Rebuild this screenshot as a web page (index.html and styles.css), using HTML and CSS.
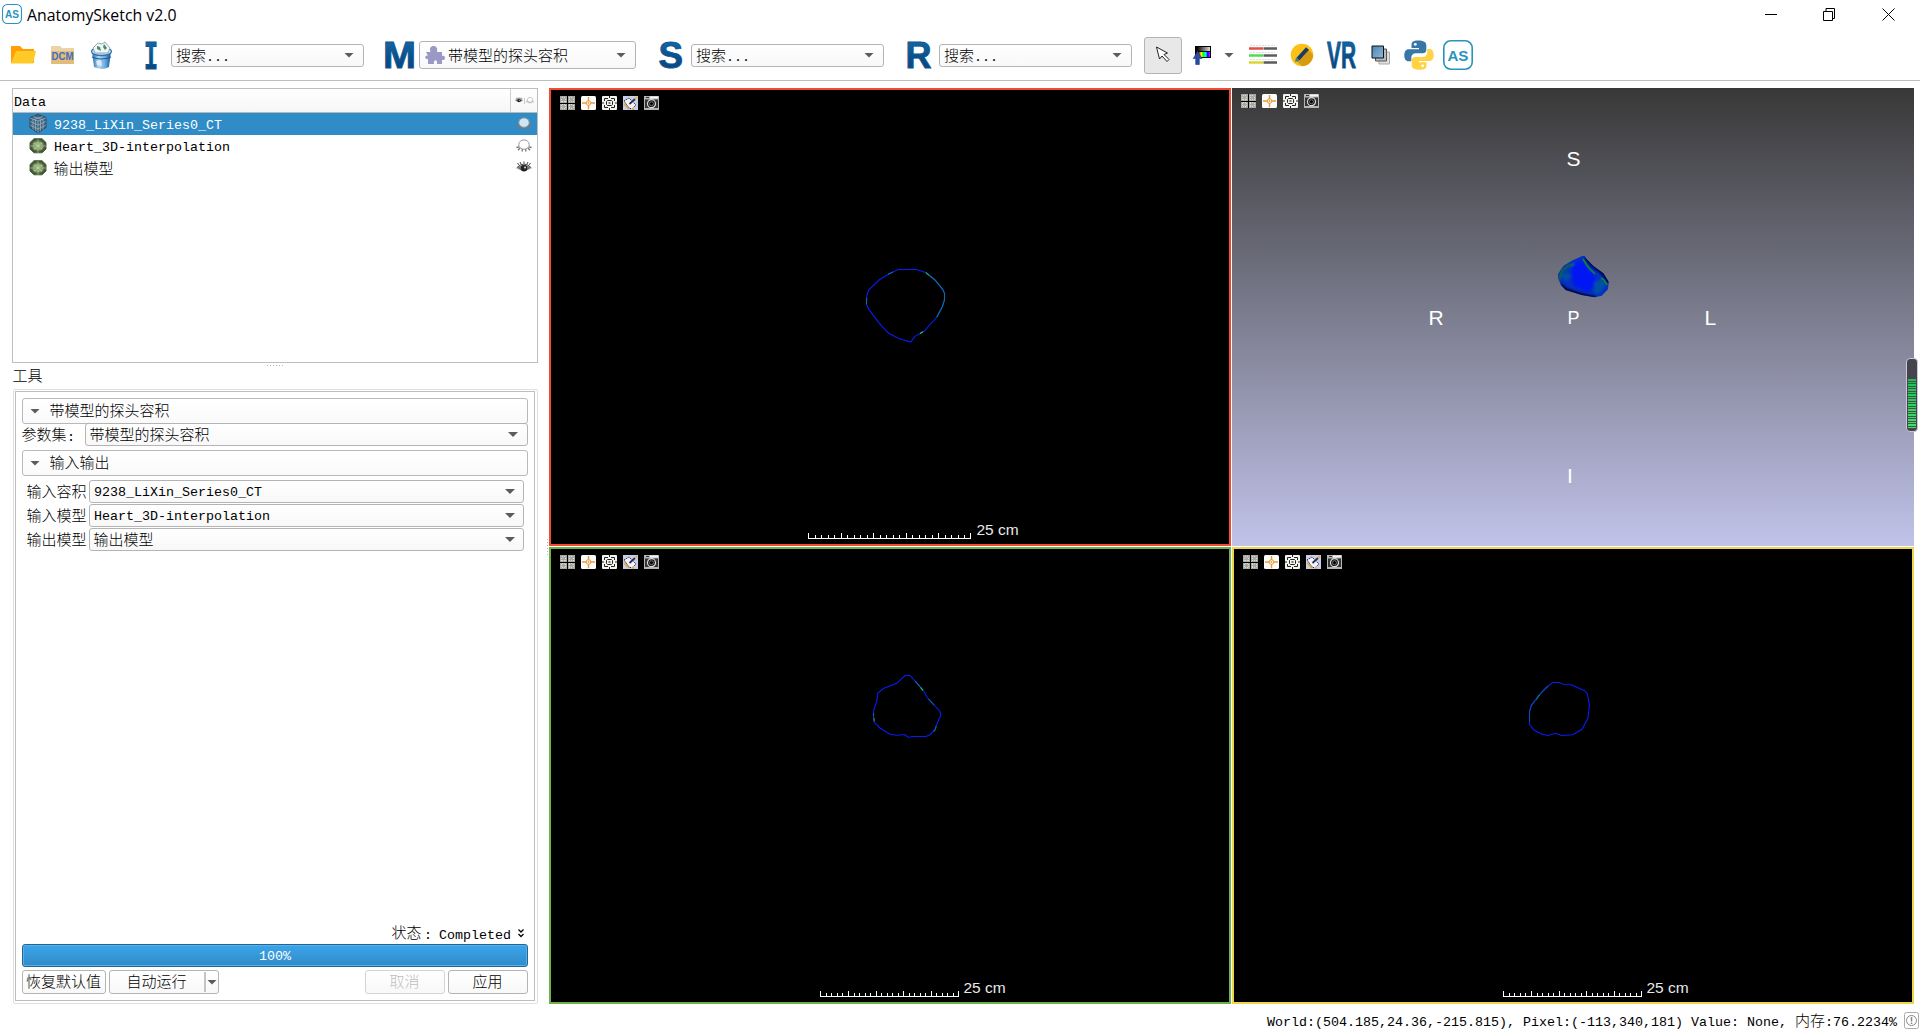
FILE: index.html
```html
<!DOCTYPE html>
<html lang="zh-CN">
<head>
<meta charset="utf-8">
<title>AnatomySketch v2.0</title>
<link rel="stylesheet" href="styles.css">
</head>
<body>
<svg class="defs" width="0" height="0" aria-hidden="true">
  <defs>
    <linearGradient id="letter" x1="0" y1="0" x2="0" y2="1"><stop offset="0" stop-color="#1c6fae"/><stop offset=".55" stop-color="#07508c"/><stop offset="1" stop-color="#123f73"/></linearGradient>
    <linearGradient id="bin" x1="0" y1="0" x2="1" y2="0"><stop offset="0" stop-color="#1d64a8"/><stop offset=".35" stop-color="#b4d8f2"/><stop offset=".7" stop-color="#6aa9dd"/><stop offset="1" stop-color="#10508f"/></linearGradient>
    <linearGradient id="spectrum"><stop offset="0" stop-color="#f00"/><stop offset=".2" stop-color="#ff0"/><stop offset=".4" stop-color="#0f0"/><stop offset=".6" stop-color="#0ff"/><stop offset=".8" stop-color="#00f"/><stop offset="1" stop-color="#f0f"/></linearGradient>
    <linearGradient id="gray"><stop offset="0" stop-color="#000"/><stop offset="1" stop-color="#ddd"/></linearGradient>
    <radialGradient id="ball"><stop offset="0" stop-color="#b7cf97"/><stop offset=".6" stop-color="#6d8a55"/><stop offset="1" stop-color="#35472d"/></radialGradient>
    <linearGradient id="sheet" x1="0" y1="0" x2="1" y2="1"><stop offset="0" stop-color="#4a86b4"/><stop offset="1" stop-color="#8db9d8"/></linearGradient>
    <filter id="soft" x="-30%" y="-30%" width="160%" height="160%"><feGaussianBlur stdDeviation="1.3"/></filter>
    <clipPath id="heart-clip"><path id="heart-shape" d="M182.300 126L171.700 130.700 163.300 136 158 144v4.300l3 6.700 4.700 5 16 5 13.300 2.300 6.700-1.600 6.300-6.400.700-7.600-5.400-8.400-10-7.300-6.600-6.700-2-3.300z"/></clipPath>
  </defs>
  <symbol id="i-grid" viewBox="0 0 15 14"><path fill="#aaaaa4" d="M0 0h15v14H0z"/><path stroke="#dcdcd4" stroke-dasharray="1 1" d="M2 1.500h4M9 1.500h4M2 12.500h4M9 12.500h4M1.500 3v3M13.500 3v3M1.500 9v3M13.500 9v3M5.500 3v3M9.500 3v3M5.500 9v3M9.500 9v3M2 5.500h4M9 5.500h4M2 8.500h4M9 8.500h4"/><path stroke="#000" d="M7.500 0v14M0 7.500h15"/></symbol>
  <symbol id="i-cross" viewBox="0 0 15 14"><rect width="15" height="14" rx="1.500" fill="#fdfdfb"/><g fill="none" stroke="#ea9a3c"><path stroke-width="1.400" d="M7.500 1v4.200M7.500 9v4.200M1 7h4.500M9.500 7H14"/><circle cx="7.500" cy="7" r="2.300"/></g><circle cx="7.500" cy="7" r=".9" fill="#f0a040"/></symbol>
  <symbol id="i-fit" viewBox="0 0 15 14"><rect width="15" height="14" rx="1" fill="#f4f4ee"/><g fill="none" stroke="#222"><path d="M2.500 5V2.500H6M9 2.500h3.500V5M12.500 9v2.500H9M6 11.500H2.500V9M7.500 0v2M7.500 12v2M0 7h2M13 7h2"/><path d="M5.500 4.500h4l1 1v3l-1 1h-4l-1-1v-3z"/></g><path fill="#777" d="M6.500 6h2v2h-2z"/></symbol>
  <symbol id="i-edit" viewBox="0 0 15 14"><path fill="#c8cdec" d="M0 0h15v14H0z"/><path fill="#f3f3f8" stroke="#222" stroke-dasharray="1.500 1" d="M1 5l5-3 7 7-4 4-3-1z"/><path stroke="#e2a52b" stroke-width="1.200" d="M1 8l5 5M9 12l2 2"/><path stroke="#222b55" stroke-width="1.700" d="M6.500 8L12 3"/><path stroke="#e8b33a" stroke-width="2" d="M12 3l2-2"/></symbol>
  <symbol id="i-cam" viewBox="0 0 15 14"><path fill="#b5b5b3" d="M0 0h15v14H0z"/><path fill="#343434" d="M1 3.500h13V12H1zM2 1h3v1H2z"/><path fill="#f7f7f7" d="M6 .5h8v2H6z"/><circle cx="7.500" cy="7.700" r="4" fill="#111" stroke="#ddd" stroke-width="1.200"/><circle cx="7.500" cy="7.700" r="2" fill="#000" stroke="#999" stroke-width=".7"/></symbol>
  <symbol id="i-mesh" viewBox="0 0 18 16"><path fill="url(#ball)" stroke="#526543" d="M5 .7h8l4 3.800v6.500l-4 3.800H5L1 11V4.500z"/><path fill="none" stroke="#d3e0bd" stroke-width=".7" d="M9 1v4M9 11v4M1 8h4M13 8h4M5 5h8v6H5zM5 5l4 3 4-3M5 11l4-3 4 3" opacity=".65"/></symbol>
  <symbol id="i-off" viewBox="0 0 16 14"><path stroke="#777" stroke-width="1.300" d="M3 8L.5 8.500M4 9l-2 2.200M6.500 10l-.5 2.500M9.500 10l.5 2.500M12 9l2 2.200M13 8l2.500.5"/><ellipse cx="8" cy="5.600" rx="5.200" ry="4.700" fill="currentColor" stroke="#999"/></symbol>
  <symbol id="i-on" viewBox="0 0 16 14"><path fill="none" stroke="#444" d="M3 4L1.500 2M5 3L4 1M8 2.500V.5M11 3l1-2M13 4l1.500-2M.5 7Q8-1 15.500 7"/><path fill="#777" d="M1 7q7-7 14 0-7 6-14 0z"/><circle cx="8" cy="7.200" r="3.200" fill="#222"/><circle cx="9" cy="6.500" r="1" fill="#ddd"/></symbol>
  <symbol id="i-as" viewBox="0 0 30 30"><rect x=".8" y=".8" width="28.400" height="28.400" rx="7" fill="#fff" stroke="#2a93bd" stroke-width="1.600"/><text x="4.400" y="20.500" class="as-text" textLength="21" lengthAdjust="spacingAndGlyphs">AS</text></symbol>
  <symbol id="i-bar" viewBox="0 0 139 6"><path stroke="#fff" d="M0 5.500h139M.5 0v6M28.500 0v6M56.500 0v6M83.500 0v6M111.500 0v6M138.500 0v6M6.500 2v4M11.500 2v4M17.500 2v4M22.500 2v4M34.500 2v4M39.500 2v4M45.500 2v4M50.500 2v4M61.500 2v4M67.500 2v4M72.500 2v4M78.500 2v4M89.500 2v4M94.500 2v4M100.500 2v4M105.500 2v4M116.500 2v4M122.500 2v4M127.500 2v4M133.500 2v4"/></symbol>
</svg>

<header class="titlebar">
  <svg class="app-icon" width="20" height="20"><use href="#i-as"/></svg>
  <span class="app-name">AnatomySketch v2.0</span>
  <svg class="win-buttons" width="130" height="13" fill="none" stroke="#000"><path d="M0 6.500h12M58.500 3.500h9v9h-9zM61 3V.5h8.500v10H68M117.500.5l12 12M129.500.5l-12 12"/></svg>
</header>

<nav class="toolbar">
  <svg class="folder" width="26" height="20"><path fill="#ffa000" d="M1 1h9l3 3h11v14H1z"/><path fill="#ffca28" d="M6 6h20l-3 12.500H1z"/></svg>
  <svg class="dcm" width="25" height="20"><path fill="#e9d3ab" d="M1 1h9l2 2h12v6H1z"/><path fill="#e4bb79" d="M1 6h23v13H1z"/><text x="1.500" y="15" class="dcm-text" textLength="22" lengthAdjust="spacingAndGlyphs">DCM</text></svg>
  <svg class="trash" width="23" height="29"><path fill="url(#bin)" d="M2 10h19l-2 16q-7 4-15 0z"/><path fill="none" stroke="#1c5e9c" stroke-width="1.200" d="M2 16q9 4 19 0"/><ellipse cx="11.500" cy="10.500" rx="10" ry="4" fill="#cfe3f2" stroke="#2d72b5" stroke-width="1.300"/><path fill="#eef6fa" stroke="#7794a3" stroke-width=".8" d="M3 7l5-5 4 1 3-2 5 6-2 5H5z"/><path fill="#4d8b62" d="M7 5l3 1 1 4-4-2zM14 3l3 4-2 2-2-3z"/><path fill="#e6f2fb" d="M6 20l5-1 1 6-5-1z" opacity=".8"/></svg>
  <svg class="l-i" width="14" height="29"><text x="0" y="27.500" class="letter slab" textLength="14" lengthAdjust="spacingAndGlyphs">I</text></svg>
  <div class="combo c-i"><span><b>搜索</b>...</span></div>
  <svg class="l-m" width="32" height="29"><text x="-1" y="27" class="letter" textLength="33" lengthAdjust="spacingAndGlyphs">M</text></svg>
  <div class="combo c-m"><svg width="20" height="20"><path fill="#9a98c4" d="M1 7h4.500C4 3 6 1 8.500 1S13 3 12 7h5v4c4-2 4 5 0 4v4h-5c1-5-4-5-3 0H3v-5c-4 1-3-5 0-3z"/></svg><span><b>带模型的探头容积</b></span></div>
  <svg class="l-s" width="24" height="29"><text x="-.5" y="27" class="letter" textLength="24.500" lengthAdjust="spacingAndGlyphs">S</text></svg>
  <div class="combo c-s"><span><b>搜索</b>...</span></div>
  <svg class="l-r" width="25" height="29"><text x="-1.500" y="27" class="letter" textLength="26" lengthAdjust="spacingAndGlyphs">R</text></svg>
  <div class="combo c-r"><span><b>搜索</b>...</span></div>
  <div class="tool-btn"><svg width="16" height="18"><path fill="#fff" stroke="#222" d="M1.500 1l3 12 2.500-3 5 5.500 2-2-5-5 3.500-1.500z"/></svg></div>
  <svg class="lut" width="20" height="20"><path fill="#000" d="M2 1h16v12H2z"/><path fill="url(#gray)" d="M4 2h13v4H4z"/><path fill="url(#spectrum)" d="M6 7h11v5H6z"/><path fill="#2b4da0" stroke="#1b3678" stroke-width=".6" d="M4.500 6L9 13.500H6.300v6H2.700v-6H.3z"/></svg>
  <i class="arrow lut-arrow"></i>
  <svg class="lines" width="28" height="22"><path stroke="#e2504a" stroke-width="2.500" d="M0 4.500h14"/><path stroke="#4cdd55" stroke-width="2.500" d="M0 11.500h14"/><path stroke="#d9d632" stroke-width="2.500" d="M0 18.500h14"/><path stroke="#5c5c5c" stroke-width="2.500" d="M14.500 4.500H28M14.500 11.500H28M14.500 18.500H28"/><path stroke="#ddd" stroke-dasharray="2 1" d="M1 1.500h25M1 8.500h25M1 15.500h25"/></svg>
  <svg class="pencil" width="24" height="24"><circle cx="12" cy="12" r="11.300" fill="#fcc019"/><path fill="#d69b12" d="M6 18L18 6l5 6a11 11 0 0 1-11 11z"/><path stroke="#1d3a63" stroke-width="4" d="M8 16L17.500 5.500"/><path fill="#1f8aa0" d="M5 19l1-4.500 3.500 3z"/></svg>
  <svg class="vr" width="29" height="30"><text x="0" y="27.500" class="letter" textLength="29" lengthAdjust="spacingAndGlyphs">VR</text></svg>
  <svg class="layers" width="20" height="20"><path fill="#e0e0e0" stroke="#aaa" d="M8 7h10.500v12H8z"/><path fill="#bbb" stroke="#555" d="M4.500 4h11v12h-11z"/><path fill="url(#sheet)" stroke="#111" d="M1 1h11.500v12H1z"/></svg>
  <svg class="python" width="30" height="30" viewBox="0 0 30 30"><path fill="#3776a8" d="M14.500.5c-6 0-7 2-7 4.500v3h7.500v1.200H4.500C2 9.200.3 11.500.3 15.200s1.600 6 4 6h3V17.500c0-2.500 2-4.300 4.300-4.300H19c2 0 3.300-1.500 3.300-3.500V5c0-3-3-4.500-7.800-4.500z"/><circle cx="11.300" cy="4.300" r="1.400" fill="#fff"/><path fill="#ffd341" d="M15.500 29.700c6 0 7-2 7-4.500v-3H15V21h10.500c2.500 0 4.200-2.300 4.200-6s-1.600-6-4-6h-2.500v3.700c0 2.500-2 4.300-4.300 4.300H11c-2 0-3.300 1.500-3.300 3.500v4.700c0 3 3 4.500 7.800 4.500z"/><circle cx="18.700" cy="25.800" r="1.400" fill="#fff"/></svg>
  <svg class="as" width="30" height="30"><use href="#i-as"/></svg>
</nav>

<main class="work">
  <aside class="side">
    <section class="tree">
      <div class="tree-head"><span class="th-name">Data</span><span class="th-eye"><svg width="8" height="7"><use href="#i-on"/></svg><i></i><svg width="8" height="7"><use href="#i-off"/></svg></span></div>
      <div class="node selected"><svg width="18" height="20"><path fill="#43667f" stroke="#2c4658" d="M9 .5l8 3v10l-8 5.500-8-5.500v-10z"/><path fill="none" stroke="#a9c3d5" stroke-width=".6" d="M1 4l8 3 8-3M9 7v12M1 7.500l8 3.500 8-3.500M1 11l8 4 8-4M4 5v10.500M6.500 6v11M11.500 6v11M14 5v10.500M4 2.500l9 3M14 2.500l-9 3"/></svg><span>9238_LiXin_Series0_CT</span><svg class="eye" width="16" height="14"><use href="#i-off"/></svg></div>
      <div class="node"><svg width="18" height="16"><use href="#i-mesh"/></svg><span>Heart_3D-interpolation</span><svg class="eye" width="16" height="14"><use href="#i-off"/></svg></div>
      <div class="node"><svg width="18" height="16"><use href="#i-mesh"/></svg><span><b>输出模型</b></span><svg class="eye" width="16" height="14"><use href="#i-on"/></svg></div>
    </section>
    <div class="grip-h"></div>
    <h2 class="tools-title"><b>工具</b></h2>
    <section class="panel">
      <div class="panel-in">
        <div class="group"><i class="arrow"></i><b>带模型的探头容积</b></div>
        <div class="param"><label><b>参数集</b>:</label><div class="combo"><span><b>带模型的探头容积</b></span></div></div>
        <div class="group g2"><i class="arrow"></i><b>输入输出</b></div>
        <div class="io">
          <label><b>输入容积</b></label><div class="combo"><span class="latin">9238_LiXin_Series0_CT</span></div>
          <label><b>输入模型</b></label><div class="combo"><span class="latin">Heart_3D-interpolation</span></div>
          <label><b>输出模型</b></label><div class="combo"><span><b>输出模型</b></span></div>
        </div>
        <div class="state"><span><b>状态</b><span class="colon">:</span>Completed</span><svg width="6" height="9" fill="none" stroke="#000" stroke-width="1.300"><path d="M.5.500L3 3 5.500.500M.5 5L3 7.500 5.500 5"/></svg></div>
        <div class="progress">100%</div>
        <div class="buttons">
          <div class="btn b1"><b>恢复默认值</b></div>
          <div class="btn b2"><b>自动运行</b><span class="drop"><i class="arrow"></i></span></div>
          <div class="btn b3"><b>取消</b></div>
          <div class="btn b4"><b>应用</b></div>
        </div>
      </div>
    </section>
  </aside>
  <div class="grip-v"></div>

  <section class="views">
    <div class="view red">
      <div class="vtools"><svg><use href="#i-grid"/></svg><svg><use href="#i-cross"/></svg><svg><use href="#i-fit"/></svg><svg><use href="#i-edit"/></svg><svg><use href="#i-cam"/></svg></div>
      <svg class="scene" viewBox="549 88 682 458">
        <g class="contour"><path d="M898.300 269.500L916.700 269.500 925.700 272.500 935 280 942.700 289.300 944.500 293.300 944.500 300 942.300 306.700 936.700 317.300 924 331.300 915 336.300 910.700 342 899.300 338.700 888.300 333 879.300 323.300 868.300 308.700 866.500 304.300 866.700 296 868.700 290 879 280 889.300 273.700z"/><path stroke="#0e6f90" d="M925.700 272.500L935 280 942.700 289.300 944.500 293.300 944.500 300 942.300 306.700 936.700 317.300M866.500 304.300L866.600 298M888 274.300L893 272"/><path stroke="#18e02c" d="M920 333.500l3-1.700"/><path stroke="#16a060" d="M926 272.700l3 2.400"/></g>
        <path stroke="#fff" shape-rendering="crispEdges" d="M808 538.500h163M808.500 533v6M841.500 533v6M873.500 533v6M906.500 533v6M938.500 533v6M970.500 533v6M815.500 535v4M821.500 535v4M828.500 535v4M834.500 535v4M847.500 535v4M854.500 535v4M860.500 535v4M867.500 535v4M880.500 535v4M886.500 535v4M893.500 535v4M899.500 535v4M912.500 535v4M919.500 535v4M925.500 535v4M932.500 535v4M945.500 535v4M951.500 535v4M958.500 535v4M964.500 535v4"/>
        <text x="976.500" y="535" class="cm">25 cm</text>
      </svg>
    </div>
    <div class="view three">
      <div class="vtools"><svg><use href="#i-grid"/></svg><svg><use href="#i-cross"/></svg><svg><use href="#i-fit"/></svg><svg><use href="#i-cam"/></svg></div>
      <svg class="scene" viewBox="1232 88 682 458">
        <g transform="translate(1400 130)">
          <use href="#heart-shape" fill="#0530c0"/>
          <g clip-path="url(#heart-clip)"><g filter="url(#soft)">
            <path fill="#0318f2" d="M172 134l9-4 13 14 2 10-8 8-14-6-2-10z"/>
            <path fill="#0558a0" opacity=".8" d="M194 152l8-3 4 5-7 10-5-1zM161 146l5-4 5 3-4 7z"/>
            <path fill="none" stroke="#0c6a3c" stroke-width="2.500" d="M159 150l3-9 6-5 6-2"/>
            <path fill="none" stroke="#01063a" stroke-width="4" d="M160 155l6 5 14 5 15 3M186 128l8 8 9 7 6 9"/>
          </g><path fill="none" stroke="#0c8a30" stroke-width="1.600" d="M183 129l5 8 7 7M201 148l3 2 3 5"/></g>
        </g>
        <g class="axis"><text x="1566.500" y="166">S</text><text x="1428.500" y="325">R</text><text x="1567.500" y="324" class="p">P</text><text x="1704.500" y="325">L</text><text x="1567" y="483">I</text></g>
      </svg>
    </div>
    <div class="view green">
      <div class="vtools"><svg><use href="#i-grid"/></svg><svg><use href="#i-cross"/></svg><svg><use href="#i-fit"/></svg><svg><use href="#i-edit"/></svg><svg><use href="#i-cam"/></svg></div>
      <svg class="scene" viewBox="549 547 682 457">
        <g class="contour"><path d="M905 675.500L910 675.500 918.300 684.700 924.300 691.700 927 697.300 939.300 710.700 940.500 713 940.500 716 936.300 725.300 935 730 930 734.700 926 736.500 912.300 736.500 908.300 737.500 904.700 734.500 897.300 735.300 890 734.300 880 728 874.300 722.300 873.500 716.700 873.500 711 876.700 701.300 878 692.700 884 688.300 896.700 683.300z"/><path stroke="#0e6f90" d="M915 681L920 686.700M928.500 699L934 705M936.300 726L935 730 933.500 731.500M873.500 713v3"/><path stroke="#18e02c" d="M920.500 687.300l2.500 3"/><path stroke="#12a050" d="M873.800 717.500l.4 4"/></g>
        <use href="#i-bar" x="820" y="991" width="139" height="6"/>
        <text x="963.500" y="993" class="cm">25 cm</text>
      </svg>
    </div>
    <div class="view yellow">
      <div class="vtools"><svg><use href="#i-grid"/></svg><svg><use href="#i-cross"/></svg><svg><use href="#i-fit"/></svg><svg><use href="#i-edit"/></svg><svg><use href="#i-cam"/></svg></div>
      <svg class="scene" viewBox="1232 547 682 457">
        <g class="contour"><path d="M1552.600 682.500L1559.300 682.500 1563.800 684.500 1571.300 684.700 1584.700 690.700 1587.400 694 1589.500 705 1587.900 718.300 1582 729.300 1572.700 734.700 1561.500 735.500 1555.700 733.300 1548 735.500 1541.400 734 1533.800 730 1529.500 724.300 1529.500 711.700 1531.200 705.700 1538.800 695.700 1545.900 688z"/><path stroke="#0e8068" d="M1535.700 700L1540 694.300"/><path stroke="#0a4bb0" d="M1529.500 722L1529.500 711.700 1531.200 705.700 1535 700.700M1540.500 693.500L1548 686"/></g>
        <use href="#i-bar" x="1503" y="991" width="139" height="6"/>
        <text x="1646.500" y="993" class="cm">25 cm</text>
      </svg>
    </div>
  </section>
</main>

<footer class="status"><span>World:(504.185,24.36,-215.815), Pixel:(-113,340,181) Value: None, <b>内存</b>:76.2234%</span><svg width="15" height="17" fill="none" stroke="#aaa"><rect x=".5" y=".5" width="14" height="16" rx="2"/><circle cx="7.500" cy="8.500" r="5" stroke="#888"/><path stroke="#888" stroke-width="1.500" d="M7.500 5v4.500M7.500 10.500v1.500"/></svg></footer>
<div class="gauge"><i></i></div>
</body>
</html>
```
FILE: styles.css
```css
* { box-sizing: border-box; }
html, body { margin: 0; height: 100%; }
body {
  width: 1920px; height: 1030px; overflow: hidden; position: relative;
  display: flex; flex-direction: column; background: #fff; color: #000;
  font: 13.333px "Liberation Mono", "Noto Sans CJK SC", monospace;
}
svg { display: block; flex: none; overflow: visible; }
.defs { position: absolute; }
b { font: 300 15px/20px "Noto Sans CJK SC", sans-serif; }
.side b { display: inline-block; transform: translate(-.5px, -1px); }
span, label { white-space: pre; }

.titlebar { height: 28px; flex: none; display: flex; align-items: center; padding: 0 25px 0 2px; }
.app-name { margin-left: 5px; padding-top: 1px; font: 15.85px "Open Sans", sans-serif; }
.win-buttons { margin-left: auto; }
.as-text { font: bold 15.500px "Liberation Sans", sans-serif; fill: #2a93bd; }
.dcm-text { font: bold 10px "Liberation Sans", sans-serif; fill: #3f6fc0; }

.toolbar { height: 53px; flex: none; display: flex; align-items: center; border-bottom: 1px solid #bebebe; padding: 2px 0 0 10px; }
.letter { font: bold 36px "Liberation Sans", sans-serif; fill: url(#letter); stroke: #0f5590; stroke-width: .9; }
.slab { font: bold 41px "Liberation Mono", monospace; }
.dcm { margin-left: 14px; }
.trash { margin-left: 15px; }
.l-i { margin-left: 31px; }
.c-i { margin-left: 13px; width: 193px; }
.l-m { margin-left: 20px; }
.c-m { margin-left: 3px; width: 217px; }
.l-s { margin-left: 23px; }
.c-s { margin-left: 8px; width: 193px; }
.l-r { margin-left: 23px; }
.c-r { margin-left: 7px; width: 193px; }
.toolbar .tool-btn { margin-left: 12px; width: 38px; height: 37px; border: 1px solid #b4b4b4; border-radius: 3px; background: #e8e8e8; display: flex; align-items: center; justify-content: center; }
.lut { margin-left: 11px; }
.lut-arrow { margin-left: 11px; }
.lines { margin-left: 15px; }
.pencil { margin-left: 13px; }
.vr { margin-left: 13px; }
.layers { margin-left: 15px; }
.python { margin-left: 13px; }
.as { margin-left: 9px; }

.arrow { flex: none; width: 10px; height: 5px; background: #5c5c5c; clip-path: polygon(0 0, 100% 0, 50% 100%); }
.combo { height: 23px; flex: none; display: flex; align-items: center; border: 1px solid #b4b4b4; border-radius: 3px; background: linear-gradient(#fff, #f8f8f8); padding: 0 9px 0 4px; }
.combo::after { content: ""; margin-left: auto; width: 10px; height: 5px; background: #5c5c5c; clip-path: polygon(0 0, 100% 0, 50% 100%); }
.combo.c-m { height: 28px; padding-left: 5px; }
.c-m span { margin-left: 3px; }
.latin { padding-top: 2px; }

.work { flex: none; height: 923px; display: flex; padding-top: 7px; }
.side { width: 526px; margin-left: 12px; flex: none; display: flex; flex-direction: column; }
.tree { height: 275px; width: 526px; flex: none; border: 1px solid #bebebe; }
.tree-head { height: 24px; display: flex; background: linear-gradient(#fff, #f6f6f6); border-bottom: 1px solid #b9b9b9; }
.th-name { flex: 1; padding-left: 1px; line-height: 28px; }
.th-eye { width: 27px; border-left: 1px solid #cfcfcf; display: flex; align-items: center; justify-content: center; gap: 1px; color: #fff; }
.th-eye i { width: 1px; height: 6px; background: #ccc; }
.node { height: 22px; display: flex; align-items: center; padding: 0 5px 0 16px; color: #000; }
.node span { margin-left: 7px; flex: 1; padding-top: 2px; }
.node .eye { color: #fff; }
.selected { background: #308cc6; color: #fff; }
.selected .eye { color: #cfe6f4; }
.grip-h { width: 16px; height: 1px; margin: 2px auto 0; background: repeating-linear-gradient(90deg, #b5b5b5 0 1px, transparent 1px 3px); }
.tools-title { margin: 0; height: 23px; line-height: 20px; font-size: 15px; padding-left: 1px; }
.tools-title b { font-weight: 300; }
.panel { width: 525px; height: 615px; margin-left: 1px; flex: none; border: 1px solid #e0e0e0; border-radius: 2px; padding: 1px 1px 2px; }
.panel-in { height: 100%; width: 520px; border: 1px solid #bebebe; padding: 6px 6px 6px; display: flex; flex-direction: column; }
.group { height: 26px; flex: none; display: flex; align-items: center; border: 1px solid #b9b9b9; border-radius: 3px; background: linear-gradient(#fff, #fafafa); padding-left: 7px; }
.group b { margin-left: 10px; }
.param { display: flex; align-items: center; margin-top: -1px; }
.param label { width: 63px; flex: none; }
.param .combo { flex: 1; }
.group.g2 { margin-top: 4px; }
.io { display: grid; grid-template-columns: 62px 435px; row-gap: 1px; margin: 4px 0 0 5px; align-items: center; }
.io .combo { padding-right: 8px; }
.io .combo, .param .combo { padding-left: 4px; }
.state { margin-top: auto; margin-bottom: 1px; display: flex; justify-content: flex-end; align-items: center; gap: 7px; padding: 0 4px 0 0; height: 20px; }
.colon { display: inline-block; width: 17px; padding-left: 2px; }
.progress { height: 23px; flex: none; border: 1px solid #1f6596; border-radius: 3px; background: linear-gradient(#3ba5ea, #308bc8); box-shadow: inset 0 0 0 1px #5bb0e5; color: #fff; text-align: center; line-height: 24px; }
.buttons { display: flex; gap: 3px; margin-top: 3px; flex: none; }
.btn { height: 24px; border: 1px solid #b4b4b4; border-radius: 3px; background: linear-gradient(#fff, #f8f8f8); display: flex; align-items: center; justify-content: center; }
.b1 { width: 84px; }
.b2 { width: 110px; padding-left: 6px; justify-content: flex-end; gap: 17px; }
.drop { width: 14px; height: 20px; border-left: 2px solid #c4c4c4; display: flex; align-items: center; justify-content: center; }
.b3 { width: 80px; margin-left: auto; border-color: #d4d4d4; color: #bebebe; }
.b4 { width: 80px; }

.grip-v { width: 1px; height: 17px; margin: 451px 1px 0 9px; background: repeating-linear-gradient(#b5b5b5 0 1px, transparent 1px 3px); }
.views { display: grid; grid-template-columns: 682px 682px; grid-template-rows: 458px 457px; gap: 1px; height: 916px; }
.view { position: relative; background: #000; border: 2px solid #f34a33; padding: 6px 9px; }
.green { border-color: #6eb04b; }
.yellow { border-color: #edd54c; }
.three { border: 0; background: linear-gradient(#383838, #7c7d8f 50%, #c1c3ea); }
.vtools { display: flex; gap: 6px; }
.vtools svg { width: 15px; height: 14px; overflow: hidden; }
.scene { position: absolute; inset: 0; width: 682px; height: 458px; margin: -2px; }
.green .scene, .yellow .scene { height: 457px; }
.three .scene { margin: 0; }
.contour { fill: none; stroke: #0a1cf5; stroke-width: 1.1; }
.cm { font: 15.5px "Liberation Sans", sans-serif; fill: #e8e8e8; }
.axis { font: 21px "Liberation Sans", sans-serif; fill: #fff; }
.p { font-size: 18px; }

.status { height: 26px; flex: none; display: flex; align-items: center; justify-content: flex-end; gap: 7px; padding: 6px 1px 0 0; }
.gauge { position: absolute; left: 1906px; top: 358px; width: 12px; height: 74px; border: 1px solid #c9c9d6; border-radius: 4px; background: #45434d; padding: 20px 1px 2px; }
.gauge i { display: block; height: 49px; background: repeating-linear-gradient(rgba(0,0,0,0) 0 2px, #355a45 2px 3px, rgba(0,0,0,0) 3px 4px, #355a45 4px 5px), linear-gradient(#1fbf55, #4bdc6c); }
```
